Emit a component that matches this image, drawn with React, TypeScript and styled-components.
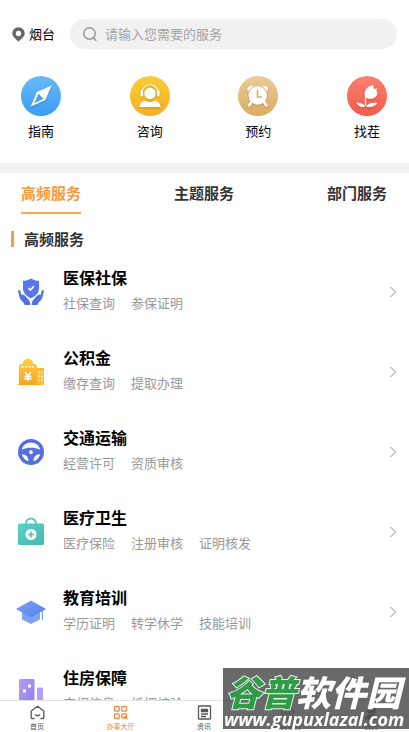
import React from 'react';
import styled, { createGlobalStyle } from 'styled-components';

const GlobalStyle = createGlobalStyle`
  *, *::before, *::after { box-sizing: border-box; }
  body {
    margin: 0;
    background: #fff;
    color: #000;
    font-family: "Noto Sans CJK SC", sans-serif;
  }
  button, input { font: inherit; color: inherit; }
  button { border: 0; padding: 0; background: none; cursor: pointer; }
  a { color: inherit; text-decoration: none; }
  h2, h3, p { margin: 0; }
`;

const Screen = styled.div`
  display: flex;
  flex-direction: column;
  height: 100vh;
  overflow: hidden;
`;

const Header = styled.header`
  display: flex;
  align-items: center;
  gap: 15px;
  padding: 19px 12px 0;
`;

const City = styled.button`
  display: flex;
  align-items: center;
  gap: 4px;
  font-size: 13px;
  line-height: 20px;
`;

const SearchBox = styled.label`
  flex: 1;
  display: flex;
  align-items: center;
  gap: 7px;
  height: 30px;
  padding: 0 12px;
  border-radius: 15px;
  background: #f1f1f1;
`;

const SearchInput = styled.input`
  flex: 1;
  min-width: 0;
  border: 0;
  padding: 0;
  outline: 0;
  background: none;
  font-size: 13px;
  line-height: 20px;
  &::placeholder { color: #a3a3a3; opacity: 1; }
`;

const Shortcuts = styled.nav`
  display: flex;
  justify-content: space-between;
  padding: 27px 22px 22px 21px;
  border-bottom: 10px solid #f4f4f4;
`;

const Shortcut = styled.a`
  display: flex;
  flex-direction: column;
  align-items: center;
  gap: 5px;
  font-size: 13px;
  line-height: 20px;
`;

const Disc = styled.span<{ $from: string; $to: string }>`
  width: 40px;
  height: 40px;
  border-radius: 50%;
  background: linear-gradient(${p => p.$from}, ${p => p.$to});
  svg { display: block; filter: drop-shadow(0 1px 1px rgba(90, 40, 0, 0.25)); }
`;

const Tabs = styled.div`
  display: flex;
  justify-content: space-between;
  padding: 9px 22px 0 21px;
`;

const Tab = styled.button<{ $active?: boolean }>`
  height: 32px;
  padding-bottom: 9px;
  border-bottom: 2px solid ${p => (p.$active ? '#fba552' : 'transparent')};
  color: ${p => (p.$active ? '#f99a3c' : '#333')};
  font-size: 15px;
  font-weight: 700;
  line-height: 21px;
`;

const Content = styled.main`
  flex: 1;
  min-height: 0;
  overflow: hidden;
`;

const SectionTitle = styled.h2`
  display: flex;
  align-items: center;
  gap: 10px;
  padding: 15px 11px 0;
  color: #333;
  font-size: 15px;
  font-weight: 700;
  line-height: 20px;
  &::before {
    content: "";
    width: 3px;
    height: 16px;
    background: #f79a40;
  }
`;

const List = styled.ul`
  margin: 0;
  padding: 3px 0 0;
  list-style: none;
`;

const Row = styled.li`
  display: flex;
  align-items: center;
  height: 80px;
  padding: 0 12px 0 15px;
`;

const RowText = styled.div`
  flex: 1;
  padding: 0 0 6px 16px;
`;

const RowTitle = styled.h3`
  font-size: 16px;
  font-weight: 700;
  line-height: 24px;
`;

const RowLinks = styled.p`
  display: flex;
  gap: 16px;
  padding-top: 4px;
  color: #999;
  font-size: 13px;
  line-height: 20px;
`;

const BottomBar = styled.nav`
  display: grid;
  grid-template-columns: repeat(5, 44px);
  justify-content: space-between;
  height: 32px;
  padding: 4px 16px 0 15px;
  border-top: 1px solid #e2e2e2;
  background: #fff;
`;

const BarItem = styled.a<{ $active?: boolean }>`
  display: flex;
  flex-direction: column;
  align-items: center;
  color: ${p => (p.$active ? '#f5843a' : '#555')};
  font-size: 7px;
  line-height: 12px;
  white-space: nowrap;
`;

const Watermark = styled.aside`
  position: fixed;
  right: 0;
  bottom: 3px;
  width: 186px;
  height: 61px;
  padding: 4px 0 0 1px;
  background: rgba(80, 80, 80, 0.86);
  color: #fff;
  white-space: nowrap;
`;

const MarkName = styled.div`
  padding-left: 2px;
  font-size: 35px;
  font-style: italic;
  font-weight: 900;
  line-height: 38px;
`;

const MarkGreen = styled.span`
  color: #2f9a48;
  -webkit-text-stroke: 2px #e4f3e6;
  paint-order: stroke fill;
`;

const MarkUrl = styled.div`
  font-family: "Open Sans", "Noto Sans", sans-serif;
  font-size: 18px;
  font-style: italic;
  font-weight: 700;
  line-height: 18px;
`;

const PinIcon = () => (
  <svg width="13" height="15" viewBox="0 0 13 15" aria-hidden="true">
    <path fill="#666" fillRule="evenodd" d="M6.500 0.300a6.200 6.200 0 0 1 6.200 6.200c0 3.400-3.700 5.300-6.200 8.200C4 11.800.3 9.900.3 6.500A6.200 6.200 0 0 1 6.500.3Zm0 3.500a2.700 2.700 0 1 0 0 5.400 2.700 2.700 0 0 0 0-5.400Z" />
  </svg>
);

const SearchIcon = () => (
  <svg width="16" height="16" viewBox="0 0 16 16" fill="none" stroke="#999" strokeWidth="1.500" strokeLinecap="round" aria-hidden="true">
    <circle cx="7.500" cy="7.500" r="5.700" />
    <path d="m11.700 11.900 2.200 2.400" />
  </svg>
);

const CompassIcon = () => (
  <svg width="40" height="40" viewBox="0 0 40 40" aria-hidden="true">
    <path fill="#fff" fillRule="evenodd" d="M30.500 9.500 24.400 24 9.800 30.500l6-14.500Zm-12.900 8.200-4.400 9.500 9.300-4.400Z" />
  </svg>
);

const AgentIcon = () => (
  <svg width="40" height="40" viewBox="0 0 40 40" fill="#fff" aria-hidden="true">
    <path d="M12 16.500a8 8 0 0 1 16 0" fill="none" stroke="#fff" strokeWidth="1.200" />
    <rect x="10.500" y="14" width="2.500" height="6.500" rx="1.200" />
    <rect x="27" y="14" width="2.500" height="6.500" rx="1.200" />
    <circle cx="20" cy="17.500" r="5.700" />
    <path d="M9.500 31c0-3.300 2.300-5.800 5.600-6.600 3 2 6.800 2 9.800 0 3.300.8 5.600 3.300 5.600 6.600Z" />
  </svg>
);

const ClockIcon = () => (
  <svg width="40" height="40" viewBox="0 0 40 40" fill="#fff" aria-hidden="true">
    <path d="M10 15.500c-2-3.500.8-6.700 5.400-5.400Zm19.500 0c2-3.500-.8-6.700-5.400-5.400Z" />
    <path d="m13.500 26-2.300 3.200M26 26l2.300 3.200" stroke="#fff" strokeWidth="2.800" strokeLinecap="round" />
    <circle cx="19.700" cy="19.500" r="9.200" />
    <path d="M19.500 14v7h4.500" fill="none" stroke="#dcae69" strokeWidth="1.600" />
  </svg>
);

const FlowerIcon = () => (
  <svg width="40" height="40" viewBox="0 0 40 40" fill="#fff" aria-hidden="true">
    <path d="M26.500 9c-.3 1.800 0 3 .6 4l3.400-.8c-1.300 1.800-1.200 3.200.1 4.600-.8 4-3.600 6-7.400 6-3.600 0-5.500-2-5.500-4.800 0-4.800 3.300-8.300 8.800-9Z" />
    <path d="M18.500 17v13" stroke="#fff" strokeWidth="1.400" />
    <path d="M18 30.700c-4.400.8-7.600-.8-8.500-4 4-.2 7.500.8 8.500 4Zm1.200 0c1.300-3 5-4.500 11-3.700-1.800 3.400-5.800 4.700-11 3.700Z" />
  </svg>
);

const InsuranceIcon = () => (
  <svg width="32" height="32" viewBox="0 0 32 32" aria-hidden="true">
    <path fill="#5675ef" d="M16 2.500c2.500 1.800 5 2.300 8 2.300v7.700c0 4.400-3.400 7.800-8 9.800-4.600-2-8-5.400-8-9.800V4.800c3 0 5.500-.5 8-2.300Z" />
    <path fill="none" stroke="#fff" strokeWidth="1.700" d="m13.500 12 2 2 3.400-3.800" />
    <path fill="#5270e2" d="M3 14.500c1.500-.7 2.300-.2 2.600 1l.6 3.500c.9-.9 2-.8 3.200.3l3.600 3.600c1.500 1.500 2.300 3 2.300 6.100H9.500c-.2-1.500-1.100-2.500-2.600-4-2.200-2.100-2.700-4.600-3.900-10.500Zm26 0c-1.500-.7-2.300-.2-2.600 1l-.6 3.500c-.9-.9-2-.8-3.200.3L19 22.900c-1.500 1.500-2.300 3-2.300 6.100h5.800c.2-1.500 1.100-2.500 2.600-4 2.200-2.100 2.700-4.600 3.900-10.500Z" />
  </svg>
);

const FundIcon = () => (
  <svg width="32" height="32" viewBox="0 0 32 32" aria-hidden="true">
    <defs>
      <linearGradient id="fund" x2="0" y2="1"><stop stopColor="#ffcf41" /><stop offset="1" stopColor="#f7a51c" /></linearGradient>
    </defs>
    <path fill="#f9bd38" d="M20 12h9v17h-9Z" />
    <path fill="url(#fund)" d="M4 28V11c0-2 1-3 3-3h.5c.5-3 2.500-4.700 5.500-5.700 3 1 5 2.700 5.500 5.700h.5c2 0 3 1 3 3v17h1v1H3v-1Z" />
    <path stroke="#fff" strokeWidth="1.500" strokeDasharray="2 1.500" d="M6.500 10.800h13" />
    <path fill="none" stroke="#fff" strokeWidth="1.500" d="m10 16 3 4 3-4m-3 4v5m-3.500-4.500h7m-7 2.200h7" />
    <path stroke="#fff2c5" strokeWidth="1.500" strokeDasharray="2 2" d="M24 15.500v9.500m3-9.500v9.500" />
  </svg>
);

const WheelIcon = () => (
  <svg width="32" height="32" viewBox="0 0 32 32" aria-hidden="true">
    <path fill="#536fe0" fillRule="evenodd" d="M16 3a13 13 0 1 1 0 26 13 13 0 0 1 0-26Zm0 3.500c-4.700 0-8.300 3-9.200 7.200 6-2.600 12.400-2.600 18.400 0C24.300 9.500 20.700 6.500 16 6.500ZM6.800 18.300c1 3.500 3.400 5.900 6.500 6.900.3-4-1.800-6.700-6.500-6.900Zm18.400 0c-4.700.2-6.800 2.900-6.500 6.900 3.100-1 5.500-3.400 6.500-6.900ZM16 14.300a1.900 1.900 0 1 0 0 3.800 1.900 1.900 0 0 0 0-3.800Z" />
  </svg>
);

const MedicalIcon = () => (
  <svg width="32" height="32" viewBox="0 0 32 32" aria-hidden="true">
    <defs>
      <linearGradient id="medical" x2="1" y2="1"><stop stopColor="#5dd0cc" /><stop offset="1" stopColor="#42b9ae" /></linearGradient>
    </defs>
    <path fill="none" stroke="#55c9c2" strokeWidth="2" d="M11 9V7.500a5 5 0 0 1 10 0V9" />
    <rect x="3" y="7.500" width="26" height="21.500" rx="1.500" fill="url(#medical)" />
    <circle cx="16" cy="18.500" r="5.500" fill="#fff" />
    <path stroke="#4dc0b8" strokeWidth="1.600" d="M16 15.500v6m-3-3h6" />
  </svg>
);

const EducationIcon = () => (
  <svg width="32" height="32" viewBox="0 0 32 32" aria-hidden="true">
    <defs>
      <linearGradient id="cap" x2="1" y2="1"><stop stopColor="#78a5f4" /><stop offset="1" stopColor="#557fea" /></linearGradient>
    </defs>
    <path fill="#7fa2f5" d="M7 15h18v8.500L16 28l-9-4.500Z" />
    <path fill="url(#cap)" d="m16 4.500 15 8.500-15 8.500L1 13Z" />
    <path stroke="#6f98f2" strokeWidth="1" d="M27.500 14.500V24" />
  </svg>
);

const HousingIcon = () => (
  <svg width="32" height="32" viewBox="0 0 32 32" aria-hidden="true">
    <defs>
      <linearGradient id="house" x2="1" y2="1"><stop stopColor="#b39df8" /><stop offset="1" stopColor="#957ee8" /></linearGradient>
    </defs>
    <path fill="url(#house)" d="M4 29V4.500C4 3.500 4.500 3 5.500 3h12.500c1 0 1.500.5 1.500 1.500V29Z" />
    <path fill="#b2a0f5" d="M22 29V13c0-1 .5-1.500 1.500-1.500h3c1 0 1.500.5 1.500 1.500v16Z" />
    <path fill="#fff" d="M13 8.500h3v3h-3Zm-5 5h3v3H8Z" />
  </svg>
);

const Chevron = () => (
  <svg width="8" height="12" viewBox="0 0 8 12" fill="none" stroke="#c5c5c5" strokeWidth="1.500" aria-hidden="true">
    <path d="m1.500 1 5 5-5 5" />
  </svg>
);

const BarSvg = ({ children }: { children: React.ReactNode }) => (
  <svg width="15" height="15" viewBox="0 0 15 15" fill="none" stroke="currentColor" strokeWidth="1.300" aria-hidden="true">
    {children}
  </svg>
);

const shortcuts = [
  { label: '指南', from: '#69baf8', to: '#389ef5', icon: <CompassIcon /> },
  { label: '咨询', from: '#f9cd35', to: '#f6ae24', icon: <AgentIcon /> },
  { label: '预约', from: '#ebcb94', to: '#dcac62', icon: <ClockIcon /> },
  { label: '找茬', from: '#fa7f70', to: '#f45c4d', icon: <FlowerIcon /> },
];

const services = [
  { title: '医保社保', links: ['社保查询', '参保证明'], icon: <InsuranceIcon /> },
  { title: '公积金', links: ['缴存查询', '提取办理'], icon: <FundIcon /> },
  { title: '交通运输', links: ['经营许可', '资质审核'], icon: <WheelIcon /> },
  { title: '医疗卫生', links: ['医疗保险', '注册审核', '证明核发'], icon: <MedicalIcon /> },
  { title: '教育培训', links: ['学历证明', '转学休学', '技能培训'], icon: <EducationIcon /> },
  { title: '住房保障', links: ['产权信息', '抵押核验'], icon: <HousingIcon /> },
];

const barItems = [
  { label: '首页', icon: <><path d="M4.500 13.500H2a.8.8 0 0 1-.8-.8V6l6.300-4.800L13.800 6v6.700a.8.800 0 0 1-.8.800h-2.500" /><path d="M5 9.500c1.500 1.500 3.500 1.500 5 0" /></> },
  { label: '办事大厅', active: true, icon: <><rect x="1.500" y="1.500" width="4.700" height="4.700" rx="1" /><rect x="8.800" y="1.500" width="4.700" height="4.700" rx="1" /><rect x="1.500" y="8.800" width="4.700" height="4.700" rx="1" /><rect x="8.800" y="8.800" width="4.700" height="4.200" rx="1" /><path d="m11.500 11 2.500 3" /></> },
  { label: '资讯', icon: <><rect x="1.500" y="1" width="12" height="13" rx=".5" /><path fill="currentColor" d="M4.500 4.500h6v2h-6Z" /><path d="M4 9h7m-7 2.500h5" /></> },
  { label: '便民服务', icon: <><circle cx="7.500" cy="7.500" r="6" /><circle cx="7.500" cy="6.500" r="2.500" /></> },
  { label: '我的', icon: <><circle cx="7.500" cy="5" r="4" fill="currentColor" /><path fill="currentColor" d="M1.500 14c0-3 2-4 6-4s6 1 6 4Z" /></> },
];

export default function App() {
  return (
    <Screen>
      <GlobalStyle />
      <Header>
        <City type="button"><PinIcon />烟台</City>
        <SearchBox>
          <SearchIcon />
          <SearchInput type="search" aria-label="搜索" placeholder="请输入您需要的服务" />
        </SearchBox>
      </Header>
      <Shortcuts>
        {shortcuts.map(s => (
          <Shortcut key={s.label} href="#">
            <Disc $from={s.from} $to={s.to}>{s.icon}</Disc>
            {s.label}
          </Shortcut>
        ))}
      </Shortcuts>
      <Tabs role="tablist">
        <Tab type="button" role="tab" aria-selected $active>高频服务</Tab>
        <Tab type="button" role="tab" aria-selected={false}>主题服务</Tab>
        <Tab type="button" role="tab" aria-selected={false}>部门服务</Tab>
      </Tabs>
      <Content>
        <SectionTitle>高频服务</SectionTitle>
        <List>
          {services.map(s => (
            <Row key={s.title}>
              {s.icon}
              <RowText>
                <RowTitle>{s.title}</RowTitle>
                <RowLinks>{s.links.map(l => <a key={l} href="#">{l}</a>)}</RowLinks>
              </RowText>
              <Chevron />
            </Row>
          ))}
        </List>
      </Content>
      <BottomBar>
        {barItems.map(b => (
          <BarItem key={b.label} href="#" $active={b.active}>
            <BarSvg>{b.icon}</BarSvg>
            {b.label}
          </BarItem>
        ))}
      </BottomBar>
      <Watermark>
        <MarkName><MarkGreen>谷普</MarkGreen>软件园</MarkName>
        <MarkUrl>www.gupuxlazal.com</MarkUrl>
      </Watermark>
    </Screen>
  );
}
